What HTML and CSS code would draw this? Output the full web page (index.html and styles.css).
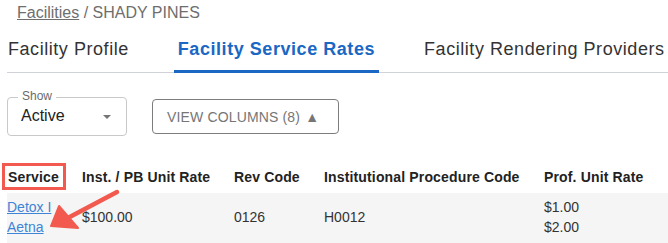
FILE: index.html
```html
<!DOCTYPE html>
<html lang="en">
<head>
<meta charset="utf-8">
<title>Facility Service Rates</title>
<link rel="stylesheet" href="styles.css">
</head>
<body>
<div class="page">
  <nav class="crumbs"><a class="crumb-link" href="#">Facilities</a> / SHADY PINES</nav>

  <div class="tabs">
    <div class="tab">Facility Profile</div>
    <div class="tab active">Facility Service Rates</div>
    <div class="tab">Facility Rendering Providers</div>
  </div>

  <div class="controls">
    <div class="select">
      <span class="select-label">Show</span>
      <span class="select-value">Active</span>
      <span class="caret"></span>
    </div>
    <button class="view-btn">VIEW COLUMNS (8) <span class="tri">▲</span></button>
  </div>

  <div class="table">
    <div class="row head">
      <div class="cell">Service</div>
      <div class="cell">Inst. / PB Unit Rate</div>
      <div class="cell">Rev Code</div>
      <div class="cell">Institutional Procedure Code</div>
      <div class="cell">Prof. Unit Rate</div>
    </div>
    <div class="row body">
      <div class="cell"><a class="link" href="#">Detox I</a><br><a class="link" href="#">Aetna</a></div>
      <div class="cell mid">$100.00</div>
      <div class="cell mid">0126</div>
      <div class="cell mid">H0012</div>
      <div class="cell">$1.00<br>$2.00</div>
    </div>
  </div>

  <div class="mark-box"></div>
  <svg class="mark-arrow" width="668" height="243" viewBox="0 0 668 243">
    <line x1="117" y1="192" x2="64" y2="220" stroke="#f25a50" stroke-width="4.5" stroke-linecap="round"/>
    <polygon points="51,226 59,206 78,228" fill="#f25a50" stroke="#f25a50" stroke-width="2" stroke-linejoin="round"/>
  </svg>
</div>
</body>
</html>
```

FILE: styles.css
```css
* { box-sizing: border-box; }

html, body {
  margin: 0;
  padding: 0;
  background: #ffffff;
}

body {
  font-family: "Liberation Sans", Arial, Helvetica, sans-serif;
  color: #333333;
  width: 668px;
  height: 243px;
  overflow: hidden;
}

.page {
  position: relative;
  width: 668px;
  height: 243px;
}

.crumbs {
  padding: 3px 0 0 17px;
  font-size: 16px;
  line-height: 20px;
  color: #6e6e6e;
  white-space: nowrap;
}

.crumb-link {
  color: #6e6e6e;
  text-decoration: underline;
}

.tabs {
  display: flex;
  gap: 40px;
  margin: 4px 0 0 7px;
  height: 46px;
  box-shadow: inset 0 -1px 0 #cfd3d7;
  white-space: nowrap;
}

.tab {
  padding: 12px 5px 11px;
  font-size: 18px;
  line-height: 20px;
  letter-spacing: 0.55px;
  color: #333333;
  border-bottom: 3px solid transparent;
}

.tab:first-child {
  margin-left: -4px;
}

.tab.active {
  color: #1a67c4;
  font-weight: 700;
  letter-spacing: 0.55px;
  padding: 12px 4px 11px;
  border-bottom-color: #1a67c4;
}

.controls {
  display: flex;
  align-items: center;
  gap: 25px;
  margin: 24px 0 0 7px;
  height: 39px;
}

.select {
  position: relative;
  display: flex;
  align-items: center;
  width: 120px;
  height: 39px;
  border: 1px solid #c9c9c9;
  border-radius: 4px;
  padding-left: 13px;
}

.select-label {
  position: absolute;
  top: -9px;
  left: 10px;
  padding: 0 4px;
  background: #ffffff;
  font-size: 12px;
  line-height: 14px;
  color: #6b6b6b;
}

.select-value {
  flex: 1;
  font-size: 16px;
  line-height: 20px;
  padding-bottom: 1px;
  color: #222222;
}

.caret {
  width: 0;
  height: 0;
  margin-right: 15px;
  border-left: 4px solid transparent;
  border-right: 4px solid transparent;
  border-top: 4px solid #757575;
}

.view-btn {
  height: 35px;
  width: 187px;
  padding: 0 0 0 14px;
  text-align: left;
  border: 1px solid #7d7d7d;
  border-radius: 4px;
  background: #ffffff;
  font-family: "Liberation Sans", Arial, Helvetica, sans-serif;
  font-size: 14px;
  letter-spacing: 0.15px;
  color: #767676;
}

.tri {
  font-size: 14px;
  margin-left: 1px;
}

.table {
  margin: 24px 0 0 7px;
}

.row {
  display: grid;
  grid-template-columns: 75px 152px 90px 220px 1fr;
  font-size: 14px;
  line-height: 20px;
}

.row.head {
  padding: 7px 0 6px;
  font-weight: 700;
  letter-spacing: 0.15px;
  color: #222222;
}

.row.head .cell:first-child {
  padding-left: 1px;
}

.row.body {
  background: #f5f5f5;
  padding: 4px 0 8px;
  color: #333333;
}

.cell.mid {
  align-self: center;
}

.link {
  color: #3f84d6;
  text-decoration: underline;
}

.mark-box {
  position: absolute;
  left: 2px;
  top: 163px;
  width: 64px;
  height: 27px;
  border: 3px solid #f25a50;
}

.mark-arrow {
  position: absolute;
  left: 0;
  top: 0;
  pointer-events: none;
}
```
